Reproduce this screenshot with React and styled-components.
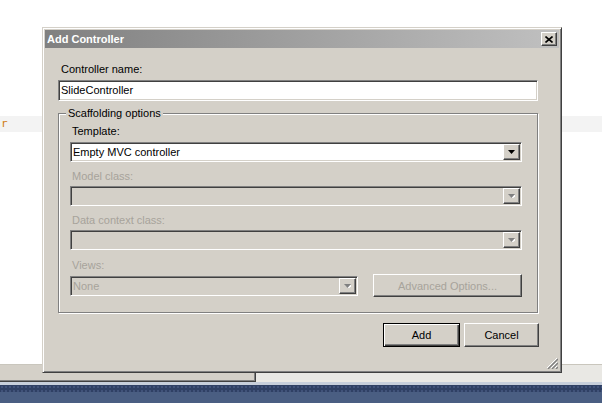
import React from 'react'
import styled, { createGlobalStyle, css } from 'styled-components'

const Global = createGlobalStyle`
  html, body {
    margin: 0;
    padding: 0;
    background: #fff;
  }
  body {
    font-family: "Liberation Sans", Arial, sans-serif;
    font-size: 11px;
  }
`

const face = '#d4d0c8'

const raised = css`
  border: 1px solid;
  border-color: #fff #404040 #404040 #fff;
  box-shadow: inset -1px -1px #808080;
  background: ${face};
`

const sunken = css`
  border: 1px solid;
  border-color: #808080 #fff #fff #808080;
  box-shadow: inset 1px 1px #404040, inset -1px -1px ${face};
`

const Screen = styled.div`
  position: relative;
  width: 602px;
  height: 403px;
  overflow: hidden;
  display: flex;
  flex-direction: column;
`

const Editor = styled.div`
  flex: 0 0 364px;
  box-sizing: border-box;
  padding-top: 116px;
`

const CodeLine = styled.div`
  height: 16px;
  background: #f3f3f3;
  color: #d07a10;
  font: 11px "DejaVu Sans Mono", monospace;
  line-height: 16px;
  padding-left: 1px;
`

const StatusStrip = styled.div`
  flex: 0 0 17px;
  display: flex;
  background: #e9e8e4;
  border-top: 1px solid #c9c6bd;
`

const OutputTab = styled.div`
  width: 256px;
  box-sizing: border-box;
  background: ${face};
  border-right: 1px solid #404040;
  border-bottom: 1px solid #404040;
  box-shadow: inset -1px -1px #808080;
`

const BlueEdge = styled.div`
  flex: 0 0 3px;
  background: #c7cfdb;
`

const DottedBand = styled.div`
  flex: 0 0 7px;
  background-color: #2f4064;
  background-image: radial-gradient(#41537a 0.8px, transparent 1px);
  background-size: 4px 4px;
`

const Taskbar = styled.div`
  flex: 1;
  background: #4a5e82;
`

const Dialog = styled.div`
  position: absolute;
  left: 42px;
  top: 27px;
  width: 520px;
  height: 346px;
  box-sizing: border-box;
  padding: 2px;
  background: ${face};
  border: 1px solid;
  border-color: ${face} #404040 #404040 ${face};
  box-shadow: inset 1px 1px #fff, inset -1px -1px #808080;
  display: flex;
  flex-direction: column;
`

const TitleBar = styled.div`
  flex: 0 0 18px;
  display: flex;
  align-items: center;
  justify-content: space-between;
  padding: 0 2px 0 2px;
  background: linear-gradient(to right, #808080, #c0c0c0);
  color: #fff;
  font-weight: bold;
  font-size: 11px;
`

const CloseButton = styled.div`
  ${raised};
  width: 16px;
  height: 14px;
  box-sizing: border-box;
  display: flex;
  align-items: center;
  justify-content: center;
`

const Body = styled.div`
  position: relative;
  flex: 1;
  padding: 14px 21px 0 13px;
  display: flex;
  flex-direction: column;
  color: #000;
`

const Label = styled.div`
  line-height: 14px;
  margin: ${p => p.$m || '0'};
  color: ${p => (p.$disabled ? '#a7a39b' : '#000')};
`

const TextBox = styled.div`
  ${sunken};
  height: 21px;
  box-sizing: border-box;
  background: #fff;
  padding-left: 2px;
  line-height: 19px;
`

const Group = styled.fieldset`
  margin: 6px 0 0;
  min-width: 0;
  padding: 4px 15px 15px 11px;
  border: 1px solid #808080;
  box-shadow: inset 1px 1px #fff, 1px 1px #fff;
`

const Legend = styled.legend`
  margin-left: -4px;
  padding: 0 2px;
  line-height: 13px;
  background: ${face};
`

const Select = styled.div`
  ${sunken};
  height: 20px;
  width: ${p => p.$width || 'auto'};
  box-sizing: border-box;
  display: flex;
  align-items: stretch;
  background: ${p => (p.$disabled ? face : '#fff')};
  color: ${p => (p.$disabled ? '#a7a39b' : '#000')};
`

const SelectText = styled.div`
  flex: 1;
  padding-left: 2px;
  line-height: 18px;
`

const DropButton = styled.div`
  ${raised};
  width: 17px;
  margin: 1px 1px 1px 0;
  box-sizing: border-box;
  display: flex;
  align-items: center;
  justify-content: center;
`

const ViewsRow = styled.div`
  display: flex;
  align-items: center;
  height: 23px;
`

const Button = styled.div`
  ${raised};
  width: ${p => p.$width}px;
  height: ${p => p.$height || 24}px;
  box-sizing: border-box;
  display: flex;
  align-items: center;
  justify-content: center;
  color: ${p => (p.$disabled ? '#a7a39b' : '#000')};
  ${p =>
    p.$default &&
    css`
      border: 1px solid #000;
      box-shadow: inset 1px 1px #fff, inset -1px -1px #404040, inset -2px -2px #808080;
    `}
`

const AdvancedButton = styled(Button)`
  margin-left: auto;
`

const ButtonRow = styled.div`
  display: flex;
  justify-content: flex-end;
  gap: 4px;
  margin: 10px -1px 0 0;
`

const Grip = styled.svg`
  position: absolute;
  right: 1px;
  bottom: 1px;
`

const Arrow = ({ disabled }) => (
  <svg width="7" height="4" viewBox="0 0 7 4">
    {disabled && <polygon points="1,1 8,1 4.5,5" fill="#fff" />}
    <polygon points="0,0 7,0 3.5,4" fill={disabled ? '#808080' : '#000'} />
  </svg>
)

const Combo = ({ value, disabled, width }) => (
  <Select $disabled={disabled} $width={width}>
    <SelectText>{value}</SelectText>
    <DropButton>
      <Arrow disabled={disabled} />
    </DropButton>
  </Select>
)

export default function App() {
  return (
    <>
      <Global />
      <Screen>
        <Editor>
          <CodeLine>r</CodeLine>
        </Editor>
        <StatusStrip>
          <OutputTab />
        </StatusStrip>
        <BlueEdge />
        <DottedBand />
        <Taskbar />

        <Dialog>
          <TitleBar>
            <span>Add Controller</span>
            <CloseButton>
              <svg width="8" height="7" viewBox="0 0 8 7">
                <path d="M0.5 0.5 L7.5 6.5 M7.5 0.5 L0.5 6.5" stroke="#000" strokeWidth="1.6" />
              </svg>
            </CloseButton>
          </TitleBar>
          <Body>
            <Label $m="0 0 4px 3px">Controller name:</Label>
            <TextBox>SlideController</TextBox>
            <Group>
              <Legend>Scaffolding options</Legend>
              <Label $m="0 0 4px 2px">Template:</Label>
              <Combo value="Empty MVC controller" />
              <Label $m="7px 0 3px 2px" $disabled>Model class:</Label>
              <Combo disabled />
              <Label $m="7px 0 3px 2px" $disabled>Data context class:</Label>
              <Combo disabled />
              <Label $m="8px 0 2px 2px" $disabled>Views:</Label>
              <ViewsRow>
                <Combo value="None" disabled width="288px" />
                <AdvancedButton $width={149} $height={23} $disabled>
                  Advanced Options...
                </AdvancedButton>
              </ViewsRow>
            </Group>
            <ButtonRow>
              <Button $width={77} $default>Add</Button>
              <Button $width={75}>Cancel</Button>
            </ButtonRow>
            <Grip width="12" height="12" viewBox="0 0 12 12">
              <path d="M11 1 L1 11 M11 5 L5 11 M11 9 L9 11" stroke="#fff" strokeWidth="1" />
              <path d="M12 2 L2 12 M12 6 L6 12 M12 10 L10 12" stroke="#808080" strokeWidth="1.4" />
            </Grip>
          </Body>
        </Dialog>
      </Screen>
    </>
  )
}
